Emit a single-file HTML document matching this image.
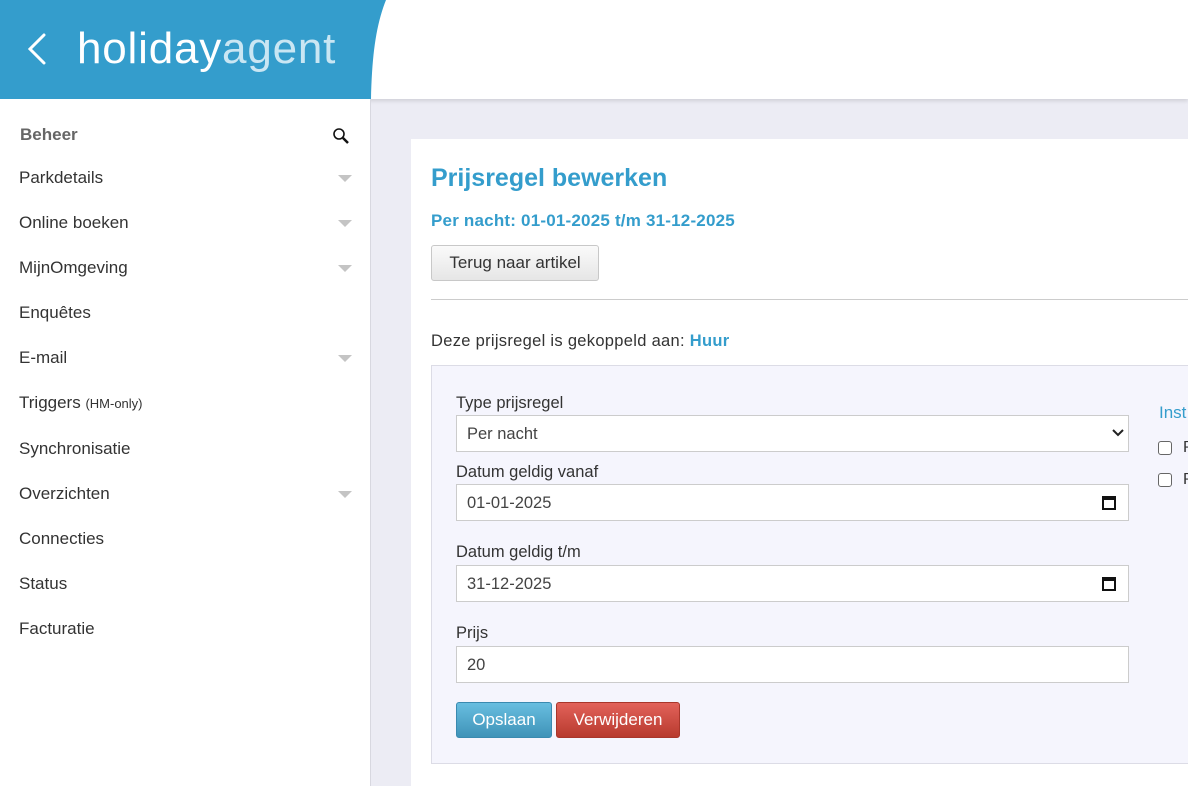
<!DOCTYPE html>
<html><head><meta charset="utf-8"><style>
*{box-sizing:border-box;margin:0;padding:0}
body{width:1188px;height:786px;overflow:hidden;background:#ececf4;font-family:"Liberation Sans",Arial,sans-serif;position:relative;color:#333}
.a{position:absolute}
#top{left:0;top:0;width:1188px;height:99px;background:#fff;box-shadow:0 2px 4px rgba(0,0,0,.12)}
#side{left:0;top:99px;width:371px;height:687px;background:#fff;border-right:1px solid #d8d8e0}
.nav{left:19px;font-size:17px;color:#333}
.car{left:338px;width:0;height:0;border-left:7px solid transparent;border-right:7px solid transparent;border-top:7px solid #c4c4c4}
#card{left:411px;top:139px;width:777px;height:647px;background:#fff}
.lbl{font-size:16px;color:#333}
.inp{left:456px;width:673px;height:37px;background:#fff;border:1px solid #ccc;font-size:16.5px;color:#444;padding:9px 10px}
.btn{border-radius:3px;font-size:17px;text-align:center;line-height:34px;height:36px}
</style></head><body>
<div id="top" class="a"></div>
<svg class="a" style="left:0;top:0" width="390" height="99"><path d="M0 0H386C376 25 372 55 371 99H0Z" fill="#349dcc"/></svg>
<svg class="a" style="left:26px;top:33px" width="22" height="32"><path d="M18 2L4 16L18 30" stroke="#fff" stroke-width="3" fill="none" stroke-linecap="round"/></svg>
<div class="a" style="left:77px;top:24px;font-size:44px;color:#fff;letter-spacing:0.8px;font-weight:300">holiday<span style="color:#c9e6f3">agent</span></div>
<div id="side" class="a"></div>
<div class="a" style="left:20px;top:125px;font-size:17px;font-weight:bold;color:#666">Beheer</div>
<svg class="a" style="left:332px;top:127px" width="18" height="18"><circle cx="7" cy="7" r="5" stroke="#111" stroke-width="1.6" fill="none"/><path d="M11 11L16 16" stroke="#111" stroke-width="2.5"/></svg>
<div class="a nav" style="top:168px">Parkdetails</div><div class="a car" style="top:175px"></div>
<div class="a nav" style="top:213px">Online boeken</div><div class="a car" style="top:220px"></div>
<div class="a nav" style="top:258px">MijnOmgeving</div><div class="a car" style="top:265px"></div>
<div class="a nav" style="top:303px">Enquêtes</div>
<div class="a nav" style="top:348px">E-mail</div><div class="a car" style="top:355px"></div>
<div class="a nav" style="top:393px">Triggers <span style="font-size:13px">(HM-only)</span></div>
<div class="a nav" style="top:439px">Synchronisatie</div>
<div class="a nav" style="top:484px">Overzichten</div><div class="a car" style="top:491px"></div>
<div class="a nav" style="top:529px">Connecties</div>
<div class="a nav" style="top:574px">Status</div>
<div class="a nav" style="top:619px">Facturatie</div>
<div id="card" class="a"></div>
<div class="a" style="left:431px;top:164px;font-size:25px;font-weight:bold;color:#349dcc">Prijsregel bewerken</div>
<div class="a" style="left:431px;top:211px;font-size:17px;font-weight:bold;color:#349dcc;letter-spacing:0.2px">Per nacht: 01-01-2025 t/m 31-12-2025</div>
<div class="a btn" style="left:431px;top:245px;width:168px;background:linear-gradient(#fafafa,#e6e6e6);border:1px solid #c8c8c8;color:#333">Terug naar artikel</div>
<div class="a" style="left:431px;top:299px;width:757px;height:1px;background:#ccc"></div>
<div class="a" style="left:431px;top:332px;font-size:16.5px;letter-spacing:0.3px">Deze prijsregel is gekoppeld aan: <b style="color:#349dcc">Huur</b></div>
<div class="a" style="left:431px;top:365px;width:760px;height:399px;background:#f5f5fd;border:1px solid #dcdce6"></div>
<div class="a lbl" style="left:456px;top:394px;font-size:16.5px">Type prijsregel</div>
<div class="a inp" style="top:415px">Per nacht</div>
<svg class="a" style="left:1112px;top:428px" width="12" height="10"><path d="M1 2L6 7L11 2" stroke="#222" stroke-width="2" fill="none"/></svg>
<div class="a lbl" style="left:456px;top:463px;font-size:16.5px">Datum geldig vanaf</div>
<div class="a inp" style="top:484px">01-01-2025</div>
<div class="a lbl" style="left:456px;top:543px;font-size:16.5px">Datum geldig t/m</div>
<div class="a inp" style="top:565px">31-12-2025</div>
<svg class="a" style="left:1101px;top:494px" width="16" height="16"><rect x="2" y="3" width="12" height="12" fill="none" stroke="#111" stroke-width="2"/><rect x="2" y="3" width="12" height="3" fill="#111"/></svg>
<svg class="a" style="left:1101px;top:575px" width="16" height="16"><rect x="2" y="3" width="12" height="12" fill="none" stroke="#111" stroke-width="2"/><rect x="2" y="3" width="12" height="3" fill="#111"/></svg>
<div class="a lbl" style="left:456px;top:624px;font-size:16.5px">Prijs</div>
<div class="a inp" style="top:646px">20</div>
<div class="a btn" style="left:456px;top:702px;width:96px;background:linear-gradient(#68bee0,#3f93b8);border:1px solid #3a8ab0;color:#fff">Opslaan</div>
<div class="a btn" style="left:556px;top:702px;width:124px;background:linear-gradient(#e2625a,#b83a2e);border:1px solid #a9362b;color:#fff">Verwijderen</div>
<div class="a" style="left:1159px;top:403px;font-size:17px;color:#349dcc">Inst</div>
<div class="a" style="left:1158px;top:441px;width:14px;height:14px;border:1px solid #666;border-radius:3px;background:#fff"></div>
<div class="a" style="left:1183px;top:439px;font-size:16px">P</div>
<div class="a" style="left:1158px;top:473px;width:14px;height:14px;border:1px solid #666;border-radius:3px;background:#fff"></div>
<div class="a" style="left:1183px;top:471px;font-size:16px">P</div>
</body></html>
